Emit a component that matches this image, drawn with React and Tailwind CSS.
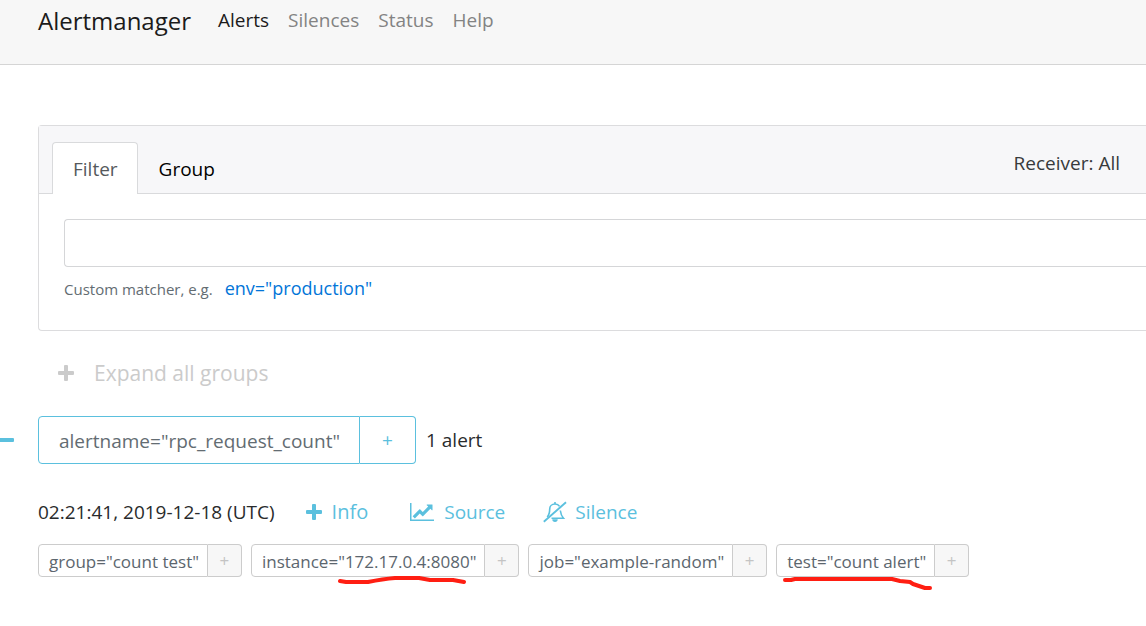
import React from "react";

const navLinks = ["Silences", "Status", "Help"];

const labels = [
  { text: 'group="count test"' },
  {
    text: 'instance="172.17.0.4:8080"',
    mark: {
      d: "M2 6 L8 7 L30 7 Q45 4 57 3 L81 3 L92 5 L115 5 L126 7",
      box: "0 0 128 12",
      className: "absolute left-[87px] top-[31px] h-3 w-32",
    },
  },
  { text: 'job="example-random"' },
  {
    text: 'test="count alert"',
    mark: {
      d: "M2 4 L8 4 L12 3 L109 3 L117 5 L127 6 L130 8 L142 12 L147 12",
      box: "0 0 149 15",
      className: "absolute left-[7px] top-8 h-[15px] w-[149px]",
    },
  },
];

function PlusIcon() {
  return (
    <svg viewBox="0 0 16 16" className="size-4 shrink-0" fill="currentColor" aria-hidden="true">
      <path d="M7 0h2a1 1 0 0 1 1 1v5h5a1 1 0 0 1 1 1v2a1 1 0 0 1-1 1h-5v5a1 1 0 0 1-1 1H7a1 1 0 0 1-1-1v-5H1a1 1 0 0 1-1-1V7a1 1 0 0 1 1-1h5V1a1 1 0 0 1 1-1z" />
    </svg>
  );
}

function ChartIcon() {
  return (
    <svg viewBox="0 128 2048 1536" className="h-[18px] w-6 shrink-0" fill="currentColor" aria-hidden="true">
      <path d="M2048 1536v128H0V128h128v1408h1920zM1920 288v435q0 21-19.5 29.5T1865 745l-121-121-633 633q-10 10-23 10t-23-10L832 1024l-416 416-192-192 585-585q10-10 23-10t23 10l233 233 464-464-121-121q-16-16-7.5-35.5T1453 256h435q14 0 23 9t9 23z" />
    </svg>
  );
}

function BellSlashIcon() {
  return (
    <svg viewBox="0 0 24 22" className="h-[22px] w-6 shrink-0" fill="none" stroke="currentColor" strokeWidth="1.6" aria-hidden="true">
      <path d="M12 1v2" />
      <path d="M16.6 5.4C15.6 3.8 14 3 12 3 8.700 3 6.700 5.200 6.700 8c0 3.500-.6 6-2.500 8" />
      <path d="M17.300 9.500c.4 3.200 1.300 5.500 3.200 7.700H8.500" />
      <path d="M9.300 18.300a2.700 2.700 0 0 0 5.400 0z" fill="currentColor" stroke="none" />
      <path d="M.8 20.700 23 1.300" strokeWidth="1.900" />
    </svg>
  );
}

function Label({ text, mark }) {
  return (
    <div className="relative flex h-[33px] text-[17px] text-[#5c666e]">
      <button className="rounded-l border border-[#ccc] pt-0.5 pr-2 pl-2.5 leading-none whitespace-nowrap">{text}</button>
      <button aria-label={"Filter by " + text} className="w-[34px] rounded-r border border-l-0 border-[#ccc] bg-[#f7f7f7] leading-none text-[#c4c4c4]">
        +
      </button>
      {mark && (
        <svg viewBox={mark.box} className={mark.className} fill="none" stroke="#ff1e12" strokeWidth="4" strokeLinecap="round" strokeLinejoin="round" aria-hidden="true">
          <path d={mark.d} />
        </svg>
      )}
    </div>
  );
}

export default function App() {
  return (
    <div className="overflow-x-hidden bg-white font-['Open_Sans','Noto_Sans',sans-serif] text-[19px] leading-7 text-[#292b2c]">
      <header className="border-b border-[#d5d5d5] bg-[#f7f7f7] pb-7 pl-[38px]">
        <nav className="flex h-9 items-center gap-[19px] pt-1">
          <a href="#home" className="mr-2 pt-0.5 text-2xl text-[#1b1b1b]">Alertmanager</a>
          <a href="#alerts" className="text-[#1b1b1b]">Alerts</a>
          {navLinks.map((name) => (
            <a key={name} href={"#" + name.toLowerCase()} className="text-[#838383]">{name}</a>
          ))}
        </nav>
      </header>

      <main className="pt-15 pl-[38px]">
        <section className="rounded-l border border-r-0 border-[#dcdcde]">
          <div className="flex h-[68px] justify-between border-b border-[#d9dadc] bg-[#f7f7f9] pt-4 pl-[13px]">
            <div className="flex" role="tablist">
              <button role="tab" aria-selected="true" className="-mb-px h-[52px] rounded-t border border-b-0 border-[#d9dadc] bg-white pr-[19px] pl-5 text-[#55595c]">
                Filter
              </button>
              <button role="tab" aria-selected="false" className="h-[52px] px-[21px] pt-0.5 text-black">Group</button>
            </div>
            <button className="mr-[26px] h-10 pt-0.5 text-[#373a3c]">Receiver: All</button>
          </div>
          <div className="pt-[25px] pb-[27px] pl-[25px]">
            <input id="matcher" type="text" className="block h-12 w-full rounded-l border border-r-0 border-[#d5d6d8] px-4 outline-none" />
            <div className="mt-[7px] flex items-baseline gap-3">
              <label htmlFor="matcher" className="text-[15px] text-[#636c72]">Custom matcher, e.g.</label>
              <a href="#env" className="text-[18px] text-[#0275d8]">env="production"</a>
            </div>
          </div>
        </section>

        <button className="mt-7 ml-5 flex items-center gap-5 text-[21px] text-[#cbcbcb]">
          <PlusIcon />
          Expand all groups
        </button>

        <div className="mt-[29px] -ml-[38px] flex items-center">
          <button aria-label="Collapse group" className="mr-6 flex h-6 w-3.5 items-center">
            <span className="h-1 w-full rounded-r-[1px] bg-[#5bc0de]" />
          </button>
          <div className="flex h-12">
            <button className="rounded-l border border-[#5bc0de] pt-0.5 pr-[19px] pl-5 text-[#636c72]">alertname="rpc_request_count"</button>
            <button aria-label="Filter by alertname" className="w-14 rounded-r border border-l-0 border-[#5bc0de] text-[#5bc0de]">+</button>
          </div>
          <span className="ml-2.5">1 alert</span>
        </div>

        <div className="mt-[34px] flex h-7 items-center">
          <span>02:21:41, 2019-12-18 (UTC)</span>
          <button className="ml-[31px] flex items-center gap-2.5 text-[20px] text-[#5bc0de]">
            <PlusIcon />
            Info
          </button>
          <a href="#source" className="ml-[42px] flex items-center gap-2.5 text-[#5bc0de]">
            <ChartIcon />
            Source
          </a>
          <button className="ml-[38px] flex items-center gap-2 text-[#5bc0de]">
            <BellSlashIcon />
            Silence
          </button>
        </div>

        <div className="mt-[18px] flex gap-[9px] pb-12">
          {labels.map((label) => (
            <Label key={label.text} text={label.text} mark={label.mark} />
          ))}
        </div>
      </main>
    </div>
  );
}
